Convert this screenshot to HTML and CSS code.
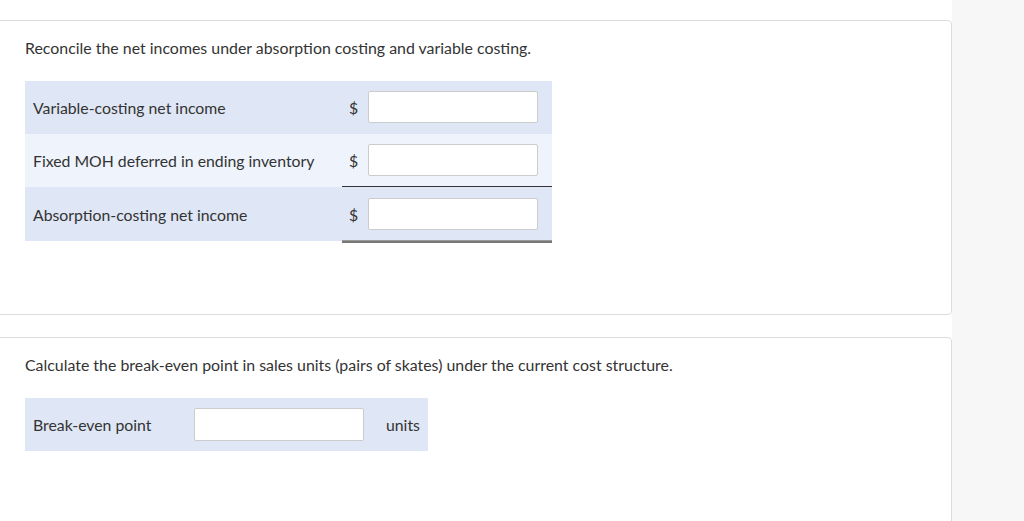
FILE: index.html
```html
<!DOCTYPE html>
<html lang="en">
<head>
  <meta charset="UTF-8">
  <title>Reconcile net incomes</title>
  <link rel="stylesheet" href="styles.css">
</head>
<body>

  <div class="page">
    <div class="main">

      <!-- Reconcile -->
      <div class="card card-first">
        <p class="question">Reconcile the net incomes under absorption costing and variable costing.</p>
        <div class="recon">
          <div class="row row-dark">
            <div class="label">Variable-costing net income</div>
            <div class="dollar">$</div>
            <div class="field"><input type="text"></div>
          </div>
          <div class="row row-light line-single">
            <div class="label">Fixed MOH deferred in ending inventory</div>
            <div class="dollar">$</div>
            <div class="field"><input type="text"></div>
          </div>
          <div class="row row-dark line-double">
            <div class="label">Absorption-costing net income</div>
            <div class="dollar">$</div>
            <div class="field"><input type="text"></div>
          </div>
        </div>
      </div>

      <!-- Break-even -->
      <div class="card card-second">
        <p class="question">Calculate the break-even point in sales units (pairs of skates) under the current cost structure.</p>
        <div class="be-row">
          <div class="be-label">Break-even point</div>
          <input type="text">
          <div class="be-unit">units</div>
        </div>
      </div>

    </div>
    <div class="side"></div>
  </div>

</body>
</html>
```

FILE: styles.css
```css
body {
  margin: 0;
  font-family: Lato, "Open Sans", Arial, sans-serif;
  color: #333;
  background: white;
}

.page {
  display: flex;
  height: 521px;
  overflow: hidden;
}

.main {
  width: 952px;
  overflow: hidden;
}

.side {
  flex: 1;
  background-color: #f7f7f7;
}

.card {
  background: white;
  border: 1px solid #dcdcdc;
  border-radius: 4px;
  margin-left: -6px;
  width: 958px;
  box-sizing: border-box;
  padding: 17px 0 0 30px;
}

.card-first {
  margin-top: 20px;
  height: 295px;
}

.card-second {
  margin-top: 22px;
  height: 200px;
}

.question {
  margin: 0;
  font-size: 15.9px;
  line-height: 20px;
}

/* reconcile table */
.recon {
  margin-top: 23px;
  width: 527px;
}

.row {
  display: grid;
  grid-template-columns: 317px 26px 184px;
  height: 53px;
  align-items: center;
  box-sizing: border-box;
  position: relative;
}

.row-dark {
  background-color: #dfe6f5;
}

.row-light {
  background-color: #eef3fc;
}

.label {
  padding-left: 8px;
  font-size: 15.8px;
}

.dollar {
  font-size: 15.8px;
  padding-left: 7px;
}

.field {
  align-self: stretch;
  display: flex;
  align-items: center;
}

.field input {
  width: 170px;
  height: 32px;
  box-sizing: border-box;
  border: 1px solid #cccccc;
  border-radius: 2px;
  background: white;
  margin-bottom: 1px;
}

.line-single::after {
  content: "";
  position: absolute;
  z-index: 1;
  left: 317px;
  right: 0;
  bottom: 0;
  border-bottom: 1px solid #333;
}

.recon .line-double {
  height: 54px;
}

.line-double::after {
  content: "";
  position: absolute;
  left: 317px;
  right: 0;
  bottom: -2px;
  height: 3px;
  background: #777;
  border-top: 1px solid #9a9a9a;
  box-sizing: border-box;
}

/* break-even */
.be-row {
  margin-top: 23px;
  width: 403px;
  height: 53px;
  background-color: #dfe6f5;
  display: flex;
  align-items: center;
  font-size: 15.8px;
}

.be-label {
  width: 169px;
  padding-left: 8px;
  box-sizing: border-box;
}

.be-row input {
  width: 170px;
  height: 33px;
  box-sizing: border-box;
  border: 1px solid #cccccc;
  border-radius: 2px;
  background: white;
}

.be-unit {
  margin-left: 22px;
}
```
